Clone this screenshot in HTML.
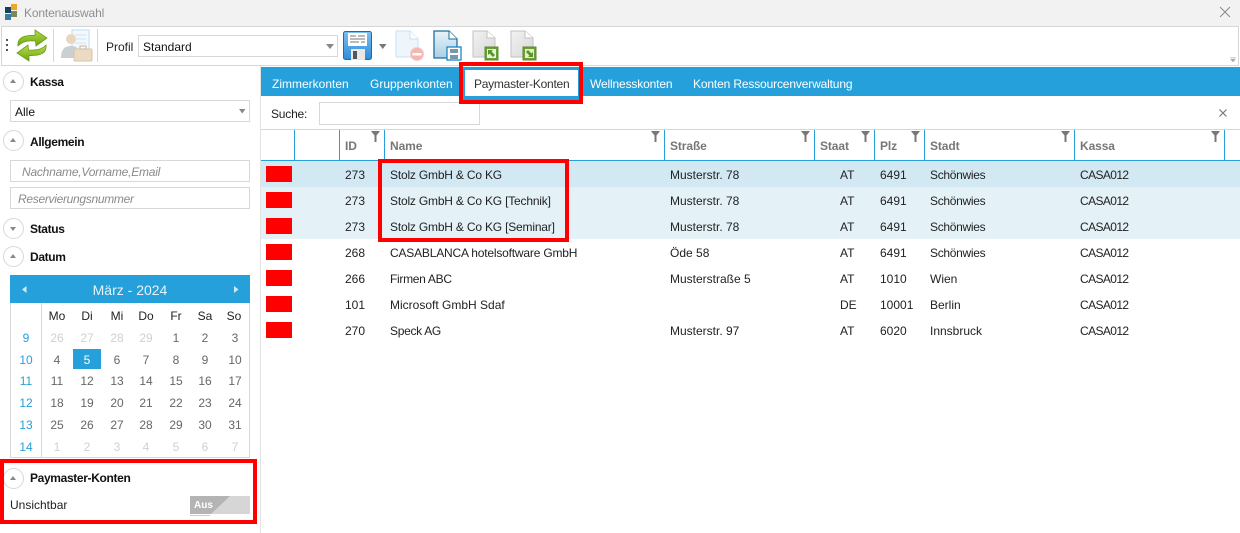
<!DOCTYPE html>
<html lang="de"><head><meta charset="utf-8"><title>Kontenauswahl</title>
<style>
html,body{margin:0;padding:0;background:#fff}
#p{position:relative;width:1240px;height:533px;overflow:hidden;background:#fff;font:12px "Liberation Sans",sans-serif;color:#222}
#p div,#p span,#p svg{position:absolute}
.t{white-space:nowrap;line-height:16px;height:16px}
.b{font-weight:bold;color:#111;letter-spacing:-.35px}
.h{font-weight:bold;color:#777;letter-spacing:-.1px}
.g{background:#fff;border:1px solid #d8d8d8;box-sizing:border-box}
.red{border:4px solid #f00;box-sizing:border-box}
.sq{left:266px;width:26px;height:16px;background:#f00}
.circ{left:3px;width:21px;height:21px;border:1px solid #d8d8d8;border-radius:50%;box-sizing:border-box;background:#fff}
.up:after,.dn:after{content:"";position:absolute;left:6px;width:0;height:0;border-left:3.5px solid transparent;border-right:3.5px solid transparent}
.up:after{top:7px;border-bottom:4px solid #888}
.dn:after{top:8px;border-top:4px solid #888}
.v{top:130px;width:1px;height:30px;background:#26a0da}
.d{width:30px;text-align:center;color:#666}
.o{width:30px;text-align:center;color:#d0d0d0}
.w{width:30px;text-align:center;color:#26a0da;left:11px}
.tab{top:76px;color:#fff;letter-spacing:-.15px}
.r{color:#222}
.n{letter-spacing:-.19px}
.c{letter-spacing:-.6px}
.s{letter-spacing:-.3px}
</style></head><body><div id="p">

<div style="left:0;top:0;width:1240px;height:26px;background:#f2f2f2"></div>
<svg style="left:5px;top:4px" width="14" height="16"><rect x="0" y="3" width="6" height="6" fill="#17405f"/><rect x="6" y="0" width="6" height="6" fill="#e9a825"/><rect x="6" y="7" width="6" height="6" fill="#7c8b52"/><rect x="0" y="10" width="6" height="6" fill="#3a7ca5"/></svg>
<span class="t" style="left:24px;top:5px;color:#8f8f8f;letter-spacing:-.15px">Kontenauswahl</span>
<svg style="left:1219px;top:6px" width="12" height="12"><path d="M1 1L11 11M11 1L1 11" stroke="#8a8a8a" stroke-width="1" fill="none"/></svg>

<div style="left:1px;top:26px;width:1238px;height:40px;background:#fff;border:1px solid #d6d6d6;box-sizing:border-box"></div>
<div style="left:6px;top:39px;width:2px;height:2px;background:#555"></div>
<div style="left:6px;top:44px;width:2px;height:2px;background:#555"></div>
<div style="left:6px;top:49px;width:2px;height:2px;background:#555"></div>
<svg style="left:16px;top:29px" width="32" height="33" viewBox="0 0 32 33"><defs><linearGradient id="gr" x1="0" y1="0" x2="0" y2="1"><stop offset="0" stop-color="#b6dc4a"/><stop offset="1" stop-color="#6ea512"/></linearGradient><linearGradient id="gy" x1="0" y1="0" x2="1" y2="1"><stop offset="0" stop-color="#f2f2f2"/><stop offset="1" stop-color="#d8d8d8"/></linearGradient><linearGradient id="bl" x1="0" y1="0" x2="0" y2="1"><stop offset="0" stop-color="#7cc0ee"/><stop offset="1" stop-color="#2f8bd8"/></linearGradient><linearGradient id="dc" x1="0" y1="0" x2="0" y2="1"><stop offset="0" stop-color="#e9f3f9"/><stop offset="1" stop-color="#a9cfe6"/></linearGradient></defs><path d="M2 17C1 8 9 6 19 6.500L19 1L31 9L20 17L19.500 12C12 11.500 7 12 2 17Z" fill="url(#gr)" stroke="#6a9c17" stroke-width=".8"/><path d="M30 16C31 25 23 27 13 26.500L13 32L1 24L12 16L12.500 21C20 21.500 25 21 30 16Z" fill="url(#gr)" stroke="#6a9c17" stroke-width=".8"/></svg>
<div style="left:53px;top:29px;width:1px;height:33px;background:#d6d6d6"></div>
<svg style="left:60px;top:29px;opacity:.75" width="33" height="33" viewBox="0 0 33 33"><rect x="12" y="1" width="17" height="22" fill="#eef6fb" stroke="#a8d4ee"/><path d="M15 6h11M15 10h11M15 14h11" stroke="#bcdcf0"/><circle cx="11" cy="10" r="5" fill="#e3c9aa"/><path d="M1 29C1 20 5 17 11 17C17 17 20 20 20 29Z" fill="#b9bfc2"/><rect x="14" y="20" width="18" height="12" rx="1" fill="#e6cfae" stroke="#cdb18b"/><rect x="20" y="17" width="6" height="3" fill="none" stroke="#bda07a"/></svg>
<div style="left:97px;top:29px;width:1px;height:33px;background:#d6d6d6"></div>
<span class="t" style="left:106px;top:39px;color:#222">Profil</span>
<div class="g" style="left:138px;top:35px;width:200px;height:22px"></div>
<span class="t" style="left:143px;top:39px;color:#111">Standard</span>
<svg style="left:326px;top:44px" width="9" height="5"><path d="M0 0H8L4 5Z" fill="#888"/></svg>
<svg style="left:343px;top:31px" width="30" height="30" viewBox="0 0 30 30"><rect x="0.500" y="0.500" width="28" height="28" rx="2" fill="url(#bl)" stroke="#1a6cb0"/><rect x="5" y="2" width="19" height="13" fill="#fff"/><path d="M7 5h6M15 5h7M7 8h15M7 11h9M18 11h4" stroke="#777"/><rect x="8" y="18" width="14" height="11" fill="#e8e8e8"/><rect x="10" y="20" width="4" height="8" fill="#555"/></svg>
<svg style="left:379px;top:44px" width="8" height="5"><path d="M0 0H7.500L3.800 5Z" fill="#777"/></svg>
<svg style="left:395px;top:30px" width="30" height="31" viewBox="0 0 30 31"><path d="M1 1H15L23 9V27H1Z" fill="#eef6fb" stroke="#c4e2f3"/><path d="M15 1V9H23" fill="#fff" stroke="#c4e2f3"/><circle cx="22" cy="24" r="6.500" fill="#f6b5ad" stroke="#f0cfc9"/><rect x="17.500" y="23" width="9" height="2.500" fill="#fff"/></svg>
<svg style="left:433px;top:30px" width="30" height="32" viewBox="0 0 30 32"><path d="M1 1H16L24 9V28H1Z" fill="url(#dc)" stroke="#1d6e9f" stroke-width="1.300"/><path d="M16 1V9H24" fill="#fff" stroke="#1d6e9f"/><rect x="14" y="17" width="14" height="13" fill="#fff" stroke="#1a86c8" stroke-width="1.300"/><rect x="17" y="19" width="8" height="4" fill="#7a97ab"/><rect x="17" y="25" width="8" height="4" fill="#7a97ab"/></svg>
<svg style="left:472px;top:30px" width="28" height="32" viewBox="0 0 28 32"><path d="M1 1H15L23 8V27H1Z" fill="url(#gy)" stroke="#c2c2c2"/><path d="M15 1V8H23" fill="#fff" stroke="#c2c2c2"/><rect x="13" y="17" width="13" height="13" fill="#6aa037" stroke="#5a8c2c"/><rect x="15" y="19" width="9" height="9" fill="#e9f2dd"/><path d="M16 20H21L19.500 21.500L23 25L21 27L17.500 23.500L16 25Z" fill="#5a9428"/></svg>
<svg style="left:510px;top:30px" width="28" height="32" viewBox="0 0 28 32"><path d="M1 1H15L23 8V27H1Z" fill="url(#gy)" stroke="#c2c2c2"/><path d="M15 1V8H23" fill="#fff" stroke="#c2c2c2"/><rect x="13" y="17" width="13" height="13" fill="#6aa037" stroke="#5a8c2c"/><rect x="15" y="19" width="9" height="9" fill="#e3edc0"/><path d="M23 27H18L19.500 25.500L16 22L18 20L21.500 23.500L23 22Z" fill="#5a9428"/></svg>
<svg style="left:1230px;top:57px" width="7" height="6"><path d="M0 0.500H6M0.500 2H5.500L3 5Z" fill="#aaa" stroke="#aaa" stroke-width="0.500"/></svg>

<!-- sidebar -->
<div style="left:260px;top:66px;width:1px;height:467px;background:#e2e2e2"></div>
<div class="circ up" style="top:71px"></div><span class="t b" style="left:30px;top:74px">Kassa</span>
<div class="g" style="left:10px;top:100px;width:240px;height:22px"></div><span class="t" style="left:15px;top:104px;color:#111">Alle</span>
<svg style="left:239px;top:109px" width="7" height="5"><path d="M0 0H6.500L3.200 4.500Z" fill="#888"/></svg>
<div class="circ up" style="top:130px"></div><span class="t b" style="left:30px;top:134px">Allgemein</span>
<div class="g" style="left:10px;top:160px;width:240px;height:22px"></div><span class="t" style="left:22px;top:164px;color:#8a8a8a;font-style:italic;letter-spacing:-.22px">Nachname,Vorname,Email</span>
<div class="g" style="left:10px;top:187px;width:240px;height:22px"></div><span class="t" style="left:18px;top:191px;color:#8a8a8a;font-style:italic;letter-spacing:-.3px">Reservierungsnummer</span>
<div class="circ dn" style="top:218px"></div><span class="t b" style="left:30px;top:221px">Status</span>
<div class="circ up" style="top:246px"></div><span class="t b" style="left:30px;top:249px">Datum</span>

<div style="left:10px;top:275px;width:240px;height:183px;border:1px solid #d8d8d8;box-sizing:border-box"></div>
<div style="left:10px;top:275px;width:240px;height:28px;background:#26a0da"></div>
<svg style="left:22px;top:286px" width="5" height="7"><path d="M4.500 0V7L0 3.500Z" fill="#cfe8f6"/></svg>
<svg style="left:234px;top:286px" width="5" height="7"><path d="M0 0V7L4.500 3.500Z" fill="#cfe8f6"/></svg>
<span class="t" style="left:10px;top:282px;width:240px;text-align:center;color:#e4f3fb;font-size:14px">März - 2024</span>
<div style="left:41px;top:303px;width:1px;height:155px;background:#d8d8d8"></div>
<span class="t d" style="left:42px;top:308px;color:#222">Mo</span><span class="t d" style="left:72px;top:308px;color:#222">Di</span><span class="t d" style="left:102px;top:308px;color:#222">Mi</span><span class="t d" style="left:131px;top:308px;color:#222">Do</span><span class="t d" style="left:161px;top:308px;color:#222">Fr</span><span class="t d" style="left:190px;top:308px;color:#222">Sa</span><span class="t d" style="left:219px;top:308px;color:#222">So</span>

<span class="t w" style="top:330px">9</span>
<span class="t o" style="left:42px;top:330px">26</span><span class="t o" style="left:72px;top:330px">27</span><span class="t o" style="left:102px;top:330px">28</span><span class="t o" style="left:131px;top:330px">29</span><span class="t d" style="left:161px;top:330px">1</span><span class="t d" style="left:190px;top:330px">2</span><span class="t d" style="left:220px;top:330px">3</span>

<span class="t w" style="top:352px">10</span>
<div style="left:73px;top:349px;width:28px;height:20px;background:#26a0da"></div>
<span class="t d" style="left:42px;top:352px">4</span><span class="t d" style="left:72px;top:352px;color:#fff">5</span><span class="t d" style="left:102px;top:352px">6</span><span class="t d" style="left:131px;top:352px">7</span><span class="t d" style="left:161px;top:352px">8</span><span class="t d" style="left:190px;top:352px">9</span><span class="t d" style="left:220px;top:352px">10</span>

<span class="t w" style="top:373px">11</span>
<span class="t d" style="left:42px;top:373px">11</span><span class="t d" style="left:72px;top:373px">12</span><span class="t d" style="left:102px;top:373px">13</span><span class="t d" style="left:131px;top:373px">14</span><span class="t d" style="left:161px;top:373px">15</span><span class="t d" style="left:190px;top:373px">16</span><span class="t d" style="left:220px;top:373px">17</span>

<span class="t w" style="top:395px">12</span>
<span class="t d" style="left:42px;top:395px">18</span><span class="t d" style="left:72px;top:395px">19</span><span class="t d" style="left:102px;top:395px">20</span><span class="t d" style="left:131px;top:395px">21</span><span class="t d" style="left:161px;top:395px">22</span><span class="t d" style="left:190px;top:395px">23</span><span class="t d" style="left:220px;top:395px">24</span>

<span class="t w" style="top:417px">13</span>
<span class="t d" style="left:42px;top:417px">25</span><span class="t d" style="left:72px;top:417px">26</span><span class="t d" style="left:102px;top:417px">27</span><span class="t d" style="left:131px;top:417px">28</span><span class="t d" style="left:161px;top:417px">29</span><span class="t d" style="left:190px;top:417px">30</span><span class="t d" style="left:220px;top:417px">31</span>

<span class="t w" style="top:439px">14</span>
<span class="t o" style="left:42px;top:439px">1</span><span class="t o" style="left:72px;top:439px">2</span><span class="t o" style="left:102px;top:439px">3</span><span class="t o" style="left:131px;top:439px">4</span><span class="t o" style="left:161px;top:439px">5</span><span class="t o" style="left:190px;top:439px">6</span><span class="t o" style="left:220px;top:439px">7</span>

<div class="circ up" style="top:468px"></div><span class="t b" style="left:30px;top:470px">Paymaster-Konten</span>
<span class="t" style="left:10px;top:497px;color:#222">Unsichtbar</span>
<div style="left:190px;top:496px;width:60px;height:18px;background:#d6d6d6"></div>
<svg style="left:190px;top:496px" width="60" height="18"><path d="M0 0H40L21 18H0Z" fill="#b4b4b4"/></svg>
<span class="t" style="left:194px;top:498px;color:#fff;font-weight:bold;font-size:10px">Aus</span>
<div style="left:190px;top:515px;width:20px;height:1px;background:#ccc"></div>

<!-- tabs -->
<div style="left:261px;top:67px;width:979px;height:29px;background:#26a0da"></div>
<div style="left:463px;top:96px;width:116px;height:4px;background:#26a0da"></div>
<div style="left:465px;top:70px;width:113px;height:26px;background:#fff"></div>
<span class="t tab" style="left:272px;letter-spacing:0">Zimmerkonten</span>
<span class="t tab" style="left:370px;letter-spacing:0">Gruppenkonten</span>
<span class="t" style="left:474px;top:76px;color:#333;letter-spacing:-.25px">Paymaster-Konten</span>
<span class="t tab" style="left:590px">Wellnesskonten</span>
<span class="t tab" style="left:693px">Konten Ressourcenverwaltung</span>

<span class="t" style="left:271px;top:106px;color:#222;letter-spacing:-.2px">Suche:</span>
<div class="g" style="left:319px;top:102px;width:161px;height:23px"></div>
<svg style="left:1219px;top:109px" width="8" height="8"><path d="M0.500 0.500L7.500 7.500M7.500 0.500L0.500 7.500" stroke="#777" stroke-width="1.200"/></svg>

<!-- grid -->
<div style="left:261px;top:129px;width:979px;height:1px;background:#d6d6d6"></div>
<div style="left:261px;top:160px;width:979px;height:1px;background:#26a0da"></div>
<div class="v" style="left:294px"></div><div class="v" style="left:339px"></div><div class="v" style="left:384px"></div><div class="v" style="left:664px"></div><div class="v" style="left:814px"></div><div class="v" style="left:874px"></div><div class="v" style="left:924px"></div><div class="v" style="left:1074px"></div><div class="v" style="left:1224px"></div>
<svg style="left:371px;top:131px" width="9" height="11"><path d="M0 0H9L5.500 4.500V11H3.500V4.500Z" fill="#777"/></svg>
<svg style="left:651px;top:131px" width="9" height="11"><path d="M0 0H9L5.500 4.500V11H3.500V4.500Z" fill="#777"/></svg>
<svg style="left:801px;top:131px" width="9" height="11"><path d="M0 0H9L5.500 4.500V11H3.500V4.500Z" fill="#777"/></svg>
<svg style="left:861px;top:131px" width="9" height="11"><path d="M0 0H9L5.500 4.500V11H3.500V4.500Z" fill="#777"/></svg>
<svg style="left:911px;top:131px" width="9" height="11"><path d="M0 0H9L5.500 4.500V11H3.500V4.500Z" fill="#777"/></svg>
<svg style="left:1061px;top:131px" width="9" height="11"><path d="M0 0H9L5.500 4.500V11H3.500V4.500Z" fill="#777"/></svg>
<svg style="left:1211px;top:131px" width="9" height="11"><path d="M0 0H9L5.500 4.500V11H3.500V4.500Z" fill="#777"/></svg>
<span class="t h" style="left:345px;top:138px">ID</span><span class="t h" style="left:390px;top:138px">Name</span><span class="t h" style="left:670px;top:138px">Straße</span><span class="t h" style="left:820px;top:138px">Staat</span><span class="t h" style="left:880px;top:138px">Plz</span><span class="t h" style="left:930px;top:138px">Stadt</span><span class="t h" style="left:1080px;top:138px">Kassa</span>

<div style="left:261px;top:161px;width:979px;height:26px;background:#d2e9f4"></div>
<div style="left:261px;top:187px;width:979px;height:52px;background:#e4f2f8"></div>

<div class="sq" style="top:166px"></div><div class="sq" style="top:192px"></div><div class="sq" style="top:218px"></div><div class="sq" style="top:244px"></div><div class="sq" style="top:270px"></div><div class="sq" style="top:296px"></div><div class="sq" style="top:322px"></div>

<span class="t r" style="left:345px;top:167px">273</span><span class="t r n" style="left:390px;top:167px">Stolz GmbH &amp; Co KG</span><span class="t r" style="left:670px;top:167px">Musterstr. 78</span><span class="t r" style="left:840px;top:167px">AT</span><span class="t r" style="left:880px;top:167px">6491</span><span class="t r s" style="left:930px;top:167px">Schönwies</span><span class="t r c" style="left:1080px;top:167px">CASA012</span>

<span class="t r" style="left:345px;top:193px">273</span><span class="t r n" style="left:390px;top:193px">Stolz GmbH &amp; Co KG [Technik]</span><span class="t r" style="left:670px;top:193px">Musterstr. 78</span><span class="t r" style="left:840px;top:193px">AT</span><span class="t r" style="left:880px;top:193px">6491</span><span class="t r s" style="left:930px;top:193px">Schönwies</span><span class="t r c" style="left:1080px;top:193px">CASA012</span>

<span class="t r" style="left:345px;top:219px">273</span><span class="t r n" style="left:390px;top:219px">Stolz GmbH &amp; Co KG [Seminar]</span><span class="t r" style="left:670px;top:219px">Musterstr. 78</span><span class="t r" style="left:840px;top:219px">AT</span><span class="t r" style="left:880px;top:219px">6491</span><span class="t r s" style="left:930px;top:219px">Schönwies</span><span class="t r c" style="left:1080px;top:219px">CASA012</span>

<span class="t r" style="left:345px;top:245px">268</span><span class="t r n" style="left:390px;top:245px">CASABLANCA hotelsoftware GmbH</span><span class="t r" style="left:670px;top:245px">Öde 58</span><span class="t r" style="left:840px;top:245px">AT</span><span class="t r" style="left:880px;top:245px">6491</span><span class="t r s" style="left:930px;top:245px">Schönwies</span><span class="t r c" style="left:1080px;top:245px">CASA012</span>

<span class="t r" style="left:345px;top:271px">266</span><span class="t r s" style="left:390px;top:271px">Firmen ABC</span><span class="t r" style="left:670px;top:271px">Musterstraße 5</span><span class="t r" style="left:840px;top:271px">AT</span><span class="t r" style="left:880px;top:271px">1010</span><span class="t r" style="left:930px;top:271px">Wien</span><span class="t r c" style="left:1080px;top:271px">CASA012</span>

<span class="t r" style="left:345px;top:297px">101</span><span class="t r" style="left:390px;top:297px">Microsoft GmbH Sdaf</span><span class="t r" style="left:840px;top:297px">DE</span><span class="t r" style="left:880px;top:297px">10001</span><span class="t r" style="left:930px;top:297px">Berlin</span><span class="t r c" style="left:1080px;top:297px">CASA012</span>

<span class="t r" style="left:345px;top:323px">270</span><span class="t r s" style="left:390px;top:323px">Speck AG</span><span class="t r" style="left:670px;top:323px">Musterstr. 97</span><span class="t r" style="left:840px;top:323px">AT</span><span class="t r" style="left:880px;top:323px">6020</span><span class="t r" style="left:930px;top:323px">Innsbruck</span><span class="t r c" style="left:1080px;top:323px">CASA012</span>

<!-- red highlights -->
<div class="red" style="left:459px;top:62px;width:124px;height:42px"></div>
<div class="red" style="left:378px;top:159px;width:191px;height:83px"></div>
<div class="red" style="left:0;top:459px;width:257px;height:65px"></div>
</div></body></html>
